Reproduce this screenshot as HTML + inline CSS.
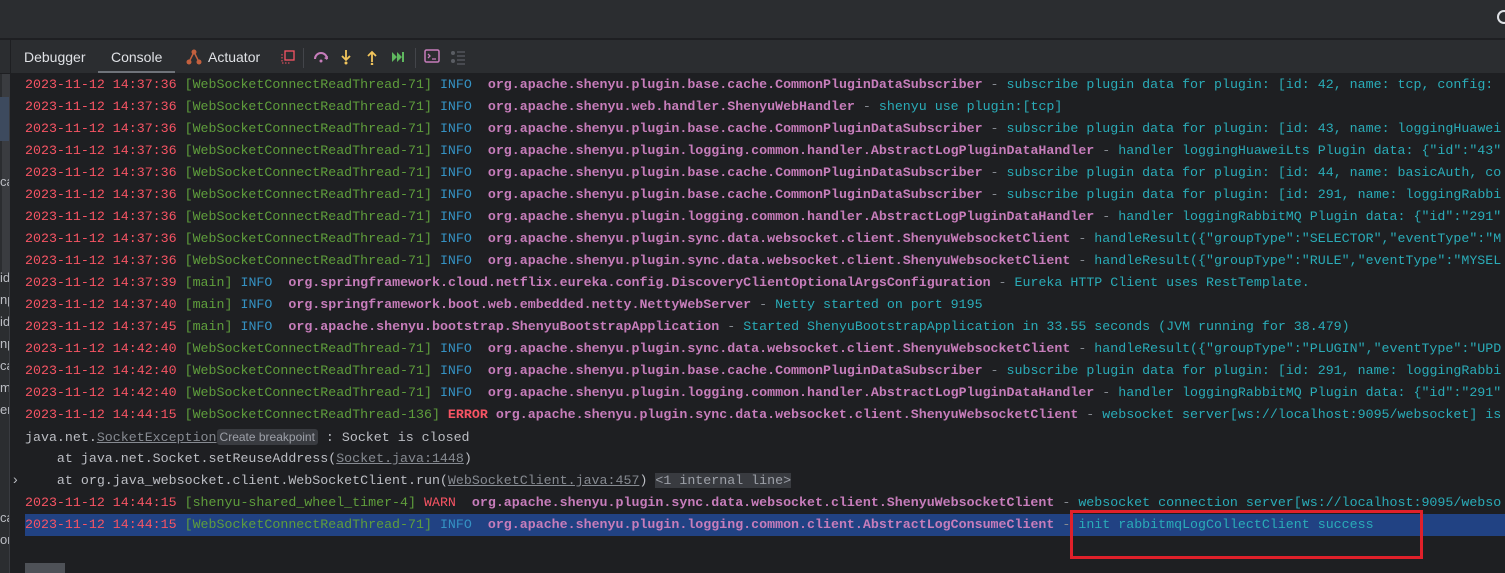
<!DOCTYPE html>
<html><head><meta charset="utf-8"><style>
*{margin:0;padding:0;box-sizing:border-box}
body{width:1505px;height:573px;overflow:hidden;background:#1e1f22;font-family:"Liberation Sans",sans-serif;position:relative}
#top{position:absolute;left:0;top:0;width:1505px;height:39px;background:#2b2d30;border-bottom:1px solid #1e1f22}
#bar{position:absolute;left:0;top:40px;width:1505px;height:34px;background:#2b2d30;border-bottom:1px solid #1e1f22}
#left{position:absolute;left:0;top:74px;width:10px;height:499px;background:#2b2d30;border-right:1px solid #393b40;overflow:hidden;font-size:13px;color:#bcbec4}
.tab{position:absolute;top:49px;font-size:14px;color:#dfe1e5}
#log{position:absolute;left:25px;top:74px;font-family:"Liberation Mono",monospace;font-size:13.3px;color:#bcbec4}
.l{height:22px;line-height:22px;white-space:pre;overflow:hidden;width:1480px}
.d{color:#f75464}.t{color:#5f9e3c}.i{color:#3592c4}.c{color:#c77dbb;font-weight:bold}.m{color:#2aacb8}.g{color:#868a91}.e{color:#f75464;font-weight:bold}.w{color:#f75464}
.u{color:#868a91;text-decoration:underline}
.sel{background:#214283}
.hint{background:#393b40;color:#9da0a8;font-family:"Liberation Sans",sans-serif;font-size:12px;padding:1px 3px;border-radius:3px}
</style></head><body>
<div id="top"><div style="position:absolute;left:1497px;top:10px;width:14px;height:14px;border:2px solid #dfe1e5;border-radius:50%"></div></div>
<div id="bar">
<div style="position:absolute;left:10px;top:0;width:1px;height:34px;background:#1e1f22"></div>
</div>
<div class="tab" style="left:24px">Debugger</div>
<div class="tab" style="left:111px">Console</div>
<div style="position:absolute;left:98px;top:71px;width:77px;height:2px;background:#6f737a"></div>
<svg style="position:absolute;left:186px;top:49px" width="16" height="16"><circle cx="8" cy="3" r="2.5" fill="#c3603e"/><circle cx="3" cy="13" r="2.5" fill="#c3603e"/><circle cx="13" cy="13" r="2.5" fill="#c3603e"/><path d="M8 3L3 13M8 3L13 13" stroke="#c3603e" stroke-width="1.5"/></svg>
<div class="tab" style="left:208px">Actuator</div>
<svg style="position:absolute;left:280px;top:49px" width="16" height="16"><rect x="5" y="2" width="9" height="9" fill="none" stroke="#f75464" stroke-width="1.3"/><path d="M2 5v9h9" fill="none" stroke="#f75464" stroke-dasharray="1.5 1.5"/></svg>
<div style="position:absolute;left:303px;top:48px;width:1px;height:20px;background:#43454a"></div>
<svg style="position:absolute;left:313px;top:49px" width="16" height="16"><path d="M2 10a6 6 0 0 1 12 0" fill="none" stroke="#c77dbb" stroke-width="2"/><path d="M11 9l3 2 1-4z" fill="#c77dbb"/><circle cx="8" cy="12" r="1.5" fill="#c77dbb"/></svg>
<svg style="position:absolute;left:338px;top:49px" width="16" height="16"><path d="M8 1v10M4 7l4 4 4-4" fill="none" stroke="#f2c55c" stroke-width="1.8"/><circle cx="8" cy="14" r="1.5" fill="#f2c55c"/></svg>
<svg style="position:absolute;left:364px;top:49px" width="16" height="16"><path d="M8 13V3M4 7l4-4 4 4" fill="none" stroke="#f2c55c" stroke-width="1.8"/><circle cx="8" cy="15" r="1.3" fill="#f2c55c"/></svg>
<svg style="position:absolute;left:390px;top:49px" width="16" height="16"><path d="M2 3l5 5-5 5zM7 3l5 5-5 5z" fill="#5fb85f"/><rect x="12" y="3" width="2" height="10" fill="#5fb85f"/></svg>
<div style="position:absolute;left:415px;top:48px;width:1px;height:20px;background:#43454a"></div>
<svg style="position:absolute;left:424px;top:48px" width="16" height="16"><rect x="1" y="2" width="14" height="12" rx="1.5" fill="none" stroke="#c77dbb" stroke-width="1.5"/><path d="M4 6l2 2-2 2M8 11h4" stroke="#c77dbb" fill="none" stroke-width="1.3"/></svg>
<svg style="position:absolute;left:450px;top:49px" width="16" height="16"><circle cx="3" cy="4" r="2" fill="#5a5d63"/><circle cx="3" cy="12" r="2" fill="#5a5d63"/><path d="M7 3h8M7 7h8M7 11h8M7 15h8" stroke="#5a5d63" stroke-width="1.3"/></svg>
<div id="left">
<div style="position:absolute;top:0;left:2px;width:8px;height:200px;background:#3a3c40"></div>
<div style="position:absolute;top:23px;height:22px;width:10px;background:#3d4a5e"></div>
<div style="position:absolute;top:45px;height:22px;width:10px;background:#3d4a5e"></div>
<div style="position:absolute;top:100px;left:0">ca</div>
<div style="position:absolute;top:196px;left:0">id</div>
<div style="position:absolute;top:218px;left:0">np</div>
<div style="position:absolute;top:240px;left:0">id</div>
<div style="position:absolute;top:262px;left:0">np</div>
<div style="position:absolute;top:284px;left:0">ca</div>
<div style="position:absolute;top:306px;left:0">m</div>
<div style="position:absolute;top:328px;left:0">er</div>
<div style="position:absolute;top:436px;left:0">ca</div>
<div style="position:absolute;top:458px;left:0">or</div>
</div>
<div style="position:absolute;left:13px;top:471px;color:#bcbec4;font-size:14px">›</div>
<div style="position:absolute;left:25px;top:563px;width:40px;height:10px;background:#4e5157"></div>
<div id="log"><div class="l"><span class="d">2023-11-12 14:37:36 </span><span class="t">[WebSocketConnectReadThread-71]</span> <span class="i">INFO </span> <span class="c">org.apache.shenyu.plugin.base.cache.CommonPluginDataSubscriber</span><span class="g"> - </span><span class="m">subscribe plugin data for plugin: [id: 42, name: tcp, config: </span></div><div class="l"><span class="d">2023-11-12 14:37:36 </span><span class="t">[WebSocketConnectReadThread-71]</span> <span class="i">INFO </span> <span class="c">org.apache.shenyu.web.handler.ShenyuWebHandler</span><span class="g"> - </span><span class="m">shenyu use plugin:[tcp]</span></div><div class="l"><span class="d">2023-11-12 14:37:36 </span><span class="t">[WebSocketConnectReadThread-71]</span> <span class="i">INFO </span> <span class="c">org.apache.shenyu.plugin.base.cache.CommonPluginDataSubscriber</span><span class="g"> - </span><span class="m">subscribe plugin data for plugin: [id: 43, name: loggingHuawei</span></div><div class="l"><span class="d">2023-11-12 14:37:36 </span><span class="t">[WebSocketConnectReadThread-71]</span> <span class="i">INFO </span> <span class="c">org.apache.shenyu.plugin.logging.common.handler.AbstractLogPluginDataHandler</span><span class="g"> - </span><span class="m">handler loggingHuaweiLts Plugin data: {"id":"43"</span></div><div class="l"><span class="d">2023-11-12 14:37:36 </span><span class="t">[WebSocketConnectReadThread-71]</span> <span class="i">INFO </span> <span class="c">org.apache.shenyu.plugin.base.cache.CommonPluginDataSubscriber</span><span class="g"> - </span><span class="m">subscribe plugin data for plugin: [id: 44, name: basicAuth, co</span></div><div class="l"><span class="d">2023-11-12 14:37:36 </span><span class="t">[WebSocketConnectReadThread-71]</span> <span class="i">INFO </span> <span class="c">org.apache.shenyu.plugin.base.cache.CommonPluginDataSubscriber</span><span class="g"> - </span><span class="m">subscribe plugin data for plugin: [id: 291, name: loggingRabbi</span></div><div class="l"><span class="d">2023-11-12 14:37:36 </span><span class="t">[WebSocketConnectReadThread-71]</span> <span class="i">INFO </span> <span class="c">org.apache.shenyu.plugin.logging.common.handler.AbstractLogPluginDataHandler</span><span class="g"> - </span><span class="m">handler loggingRabbitMQ Plugin data: {"id":"291"</span></div><div class="l"><span class="d">2023-11-12 14:37:36 </span><span class="t">[WebSocketConnectReadThread-71]</span> <span class="i">INFO </span> <span class="c">org.apache.shenyu.plugin.sync.data.websocket.client.ShenyuWebsocketClient</span><span class="g"> - </span><span class="m">handleResult({"groupType":"SELECTOR","eventType":"M</span></div><div class="l"><span class="d">2023-11-12 14:37:36 </span><span class="t">[WebSocketConnectReadThread-71]</span> <span class="i">INFO </span> <span class="c">org.apache.shenyu.plugin.sync.data.websocket.client.ShenyuWebsocketClient</span><span class="g"> - </span><span class="m">handleResult({"groupType":"RULE","eventType":"MYSEL</span></div><div class="l"><span class="d">2023-11-12 14:37:39 </span><span class="t">[main]</span> <span class="i">INFO </span> <span class="c">org.springframework.cloud.netflix.eureka.config.DiscoveryClientOptionalArgsConfiguration</span><span class="g"> - </span><span class="m">Eureka HTTP Client uses RestTemplate.</span></div><div class="l"><span class="d">2023-11-12 14:37:40 </span><span class="t">[main]</span> <span class="i">INFO </span> <span class="c">org.springframework.boot.web.embedded.netty.NettyWebServer</span><span class="g"> - </span><span class="m">Netty started on port 9195</span></div><div class="l"><span class="d">2023-11-12 14:37:45 </span><span class="t">[main]</span> <span class="i">INFO </span> <span class="c">org.apache.shenyu.bootstrap.ShenyuBootstrapApplication</span><span class="g"> - </span><span class="m">Started ShenyuBootstrapApplication in 33.55 seconds (JVM running for 38.479)</span></div><div class="l"><span class="d">2023-11-12 14:42:40 </span><span class="t">[WebSocketConnectReadThread-71]</span> <span class="i">INFO </span> <span class="c">org.apache.shenyu.plugin.sync.data.websocket.client.ShenyuWebsocketClient</span><span class="g"> - </span><span class="m">handleResult({"groupType":"PLUGIN","eventType":"UPD</span></div><div class="l"><span class="d">2023-11-12 14:42:40 </span><span class="t">[WebSocketConnectReadThread-71]</span> <span class="i">INFO </span> <span class="c">org.apache.shenyu.plugin.base.cache.CommonPluginDataSubscriber</span><span class="g"> - </span><span class="m">subscribe plugin data for plugin: [id: 291, name: loggingRabbi</span></div><div class="l"><span class="d">2023-11-12 14:42:40 </span><span class="t">[WebSocketConnectReadThread-71]</span> <span class="i">INFO </span> <span class="c">org.apache.shenyu.plugin.logging.common.handler.AbstractLogPluginDataHandler</span><span class="g"> - </span><span class="m">handler loggingRabbitMQ Plugin data: {"id":"291"</span></div><div class="l"><span class="d">2023-11-12 14:44:15 </span><span class="t">[WebSocketConnectReadThread-136]</span> <span class="e">ERROR</span> <span class="c">org.apache.shenyu.plugin.sync.data.websocket.client.ShenyuWebsocketClient</span><span class="g"> - </span><span class="m">websocket server[ws://localhost:9095/websocket] is</span></div><div class="l">java.net.<span class="u">SocketException</span><span class="hint">Create breakpoint</span> : Socket is closed</div><div class="l">    at java.net.Socket.setReuseAddress(<span class="u">Socket.java:1448</span>)</div><div class="l">    at org.java_websocket.client.WebSocketClient.run(<span class="u">WebSocketClient.java:457</span>) <span style="background:#393b40;color:#9da0a8">&lt;1 internal line&gt;</span></div><div class="l"><span class="d">2023-11-12 14:44:15 </span><span class="t">[shenyu-shared_wheel_timer-4]</span> <span class="w">WARN </span> <span class="c">org.apache.shenyu.plugin.sync.data.websocket.client.ShenyuWebsocketClient</span><span class="g"> - </span><span class="m">websocket connection server[ws://localhost:9095/webso</span></div><div class="l sel"><span class="d">2023-11-12 14:44:15 </span><span class="t">[WebSocketConnectReadThread-71]</span> <span class="i">INFO </span> <span class="c">org.apache.shenyu.plugin.logging.common.client.AbstractLogConsumeClient</span><span class="g"> - </span><span class="m">init rabbitmqLogCollectClient success</span></div></div>
<div style="position:absolute;left:1070px;top:510px;width:353px;height:49px;border:3px solid #e0202a"></div>
</body></html>
